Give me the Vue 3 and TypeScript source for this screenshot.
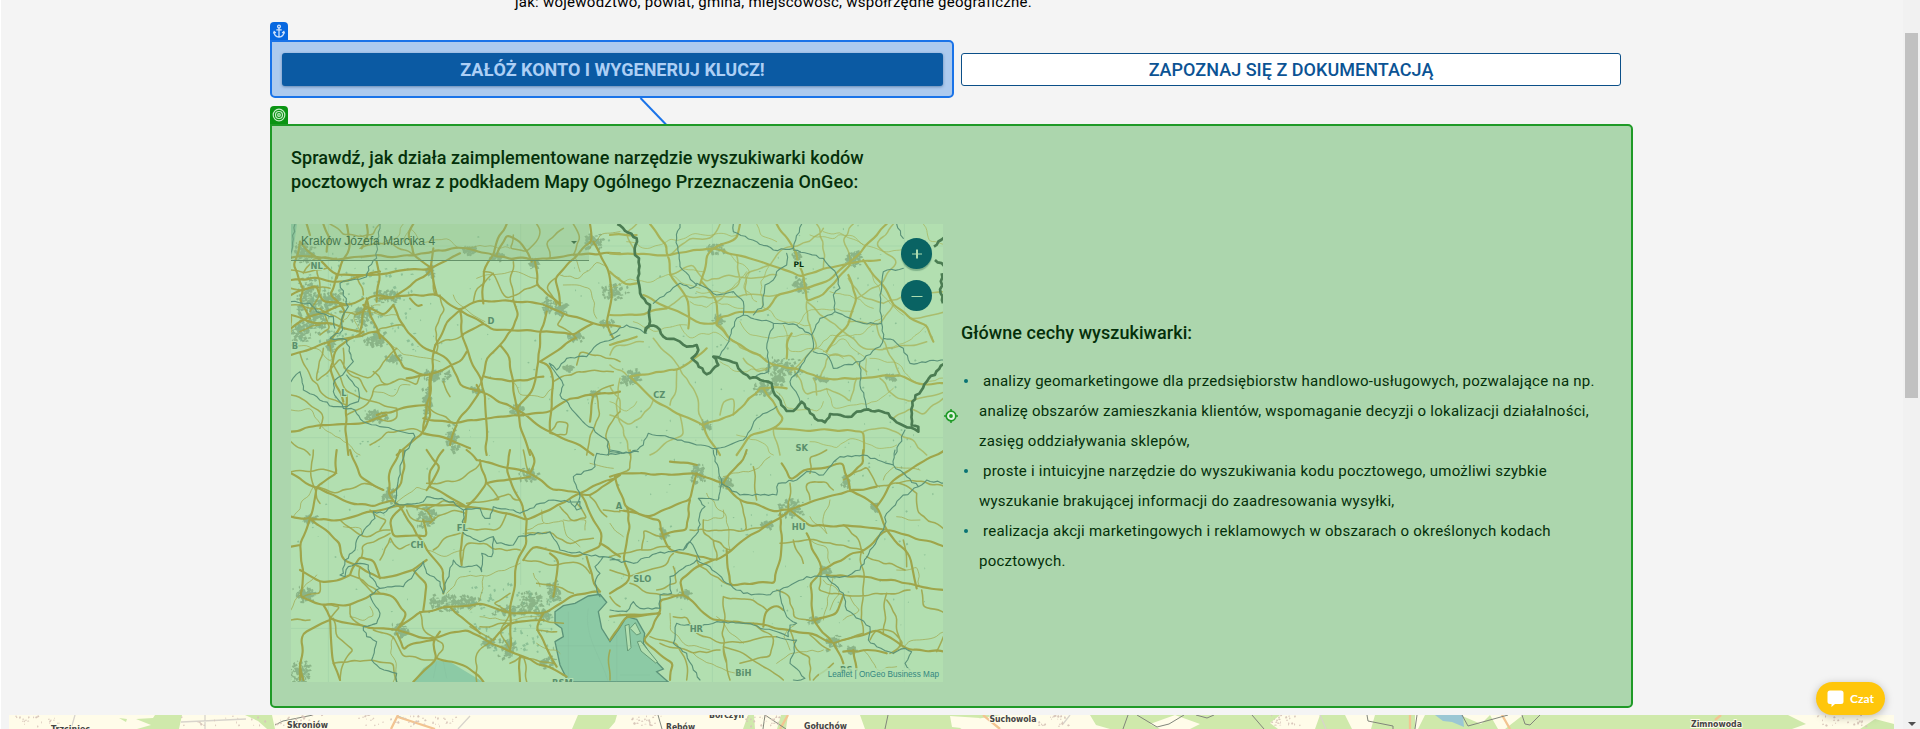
<script setup lang="ts">
interface Tile { x: number; y: number; major: string[]; mid: string[]; minor: string[]; border: string[] }
interface Label { t: string; x: number; y: number; dark?: boolean }

const features = [
  ['analizy geomarketingowe dla przedsiębiorstw handlowo-usługowych, pozwalające na np.', 'analizę obszarów zamieszkania klientów, wspomaganie decyzji o lokalizacji działalności,', 'zasięg oddziaływania sklepów,'],
  ['proste i intuicyjne narzędzie do wyszukiwania kodu pocztowego, umożliwi szybkie', 'wyszukanie brakującej informacji do zaadresowania wysyłki,'],
  ['realizacja akcji marketingowych i reklamowych w obszarach o określonych kodach', 'pocztowych.'],
]

// Map geometry, one entry per tile, three units to a CSS pixel.
const tiles: Tile[] = [
  {
    x: 0, y: 0,
    major: [
      'M33 128L100 125L170 135L250 125L400 122L470 105L560 100L650 125L760 135L850 125L930 115L1020 115',
      'M300 250L380 243L470 238L540 285L580 262L680 255L790 268L840 290L940 325L1020 335',
      'M540 285L500 320L465 390L455 480L440 590L430 655L350 720',
      'M470 238L455 160L400 120L385 60L400 27', 'M540 285L545 360L570 430L605 495L615 560L620 720',
      'M340 270L370 330L420 390L500 430L540 510L600 530L700 580L760 620L810 650L900 690L940 720',
      'M33 420L150 380L290 350', 'M240 350L260 250L290 240L340 250', 'M380 490L440 480L490 465L540 440L560 410',
      'M33 300L110 325L170 330L240 350', 'M545 360L610 325L640 345L750 345L880 360L940 325',
      'M610 325L540 285', 'M800 290L780 350L775 440L755 530L710 580L730 660L750 720',
      'M33 650L120 630L250 625L320 600', 'M430 610L520 625L700 600L810 590L870 550L940 540L1020 530',
      'M605 495L620 430L660 390L700 340L715 300L700 255', 'M660 390L690 430L700 500L710 580',
      'M615 485L690 500L790 485', 'M200 540L195 640L205 720', 'M60 80L90 115L170 180L250 180L370 165L455 160L540 115',
      'M840 270L825 190L900 110L935 80L930 27', 'M765 140L770 210L840 270', 'M610 265L610 170L640 120L650 80L680 27',
      'M940 80L965 130L990 190L995 250L980 320L1000 370', 'M885 370L780 440', 'M290 350L340 400L370 460L440 480',
      'M33 195L120 190L180 200L300 170', 'M33 240L110 210L130 260L200 270L250 250', 'M33 340L100 300L200 270',
      'M430 655L500 670L570 700', 'M530 630L510 690', 'M530 625L600 530L590 510',
      'M290 600L350 585L440 570', 'M940 540L930 620', 'M810 650L815 550L820 500L805 450L780 440',
      'M60 80L40 150L70 220L60 260L90 310', 'M170 180L150 240L195 290L180 340L145 390', 'M90 60L80 27', 'M130 27L150 70L140 110', 'M200 27L210 90L180 160L170 190',
      'M245 100L265 60L260 27', 'M460 100L450 170L350 240', 'M250 350L170 400L150 460L190 560', 'M290 140L300 190L290 260', 'M755 140L720 80L680 60L650 120',
      'M390 250L410 275L425 270', 'M450 480L448 540L452 600L425 655', 'M260 250L270 300L300 370', 'M250 270L310 300L340 270',
    ],
    mid: [
      'M150 390L160 450L200 530L280 560L350 580', 'M60 415L90 480L130 540L200 570', 'M33 300L33 350', 'M33 540L80 560L130 600L120 640',
      'M370 330L300 340L290 350', 'M465 390L550 360', 'M350 400L300 460L270 490L190 460L190 400', 'M490 500L510 545', 'M585 530L605 495',
      'M700 60L690 100L740 110L780 60L770 27', 'M770 210L680 250L640 175L610 170', 'M880 27L900 70L880 120', 'M810 130L800 80L850 40',
      'M455 160L465 240', 'M580 262L590 220L640 175', 'M150 27L190 60L280 60L300 27', 'M400 120L330 80L240 100', 'M480 240L495 285L465 340L475 390L470 410',
      'M820 500L890 470L1000 470', 'M890 450L900 410L960 420L1020 440', 'M940 540L1000 510', 'M850 300L830 330L890 370', 'M810 650L830 620L865 625L860 660L810 655',
      'M280 470L320 510L360 490L410 510L420 480', 'M130 400L110 500L180 430L210 480L240 490L260 530', 'M33 680L90 720', 'M270 690L320 650L390 640L430 655',
      'M350 580L350 610L330 620L290 610', 'M440 570L480 600L530 625', 'M33 220L150 220', 'M33 270L120 280L190 320', 'M70 175L100 130L170 130', 'M200 600L260 570L280 520L340 500',
      'M120 280L150 340L120 360', 'M60 350L120 330', 'M700 255L690 200L700 140', 'M825 190L800 220L830 270', 'M950 540L960 600L930 660L920 720', 'M1020 590L980 650L985 720',
      'M110 160L120 230L90 290', 'M33 165L90 170L140 160', 'M230 180L250 240', 'M180 290L230 300L260 280',
    ],
    minor: ['M33 585L90 580L130 640L190 680L240 720', 'M360 90L390 40L420 80L500 70L540 100L600 90L690 100', 'M240 60L300 90L350 70L370 27', 'M840 180L900 190L950 140L1020 190', 'M850 210L930 220L950 310', 'M900 170L880 120', 'M280 530L340 545L360 510L390 510', 'M700 500L720 540L790 550L820 520', 'M615 320L540 270L520 240', 'M320 380L380 420L480 440', 'M180 330L220 290L300 300L350 300', 'M33 390L110 400L160 440', 'M1020 50L960 60L930 100', 'M590 190L690 170L770 190', 'M240 350L220 310L250 280L300 270'],
    border: ['M300 27L290 90L290 130L265 155L260 185L215 195L180 205L205 275L185 315L188 345L150 370L200 375L220 440L195 470L165 495L160 530L190 580L225 585L250 620L300 635L400 655L405 665L370 720', 'M33 500L60 470L70 525L160 575L200 575L235 560L235 520L200 480', 'M808 445L850 510L840 540L900 610L985 680L985 720', 'M808 445L830 465L860 430L920 425L950 390L1020 360', 'M33 260L90 265L110 290L160 305L165 340', 'M33 130L45 27'],
  },
  {
    x: 990, y: 0,
    major: [
      'M0 115L80 118L180 120L300 100L380 120L480 150L570 185L640 160L720 145L810 135', 'M120 27L170 90L180 180L235 260L235 340',
      'M100 240L180 280L270 325L320 325L330 305L400 290L470 285L500 240L590 220L660 195L720 140L830 27',
      'M320 330L370 380L450 420L490 450L550 460L630 490L750 490L870 480L920 505L1005 505', 'M500 27L550 100L580 180L590 260L640 240L720 150',
      'M760 135L810 200L850 270L900 310L950 330L970 380', 'M270 210L290 120L310 100L380 70L390 27', 'M275 200L320 260L320 330',
      'M530 430L535 370L545 355', 'M715 180L740 250L715 330L670 380L650 410', 'M455 520L530 520', 'M0 60L80 60',
      'M0 300L80 300L170 280', 'M0 390L80 365', 'M60 485L130 555L210 600L280 630L310 690L330 720', 'M60 485L140 470L200 465L290 400', 'M280 630L370 600L450 520',
      'M460 520L500 580L520 610L490 640L420 660L380 720', 'M490 640L620 645L760 650L760 720', 'M0 170L50 210L80 205',
    ],
    mid: [
      'M30 490L20 580L60 720', 'M130 370L210 460L250 520L280 630', 'M200 465L195 540L180 570', 'M0 450L50 480', 'M450 420L390 400L330 330', 'M80 118L50 50L80 27', 'M180 120L240 70L300 70L330 27',
      'M180 180L250 150L290 200L360 180L430 190L500 180', 'M170 280L220 240L300 250L400 240L500 240', 'M320 260L390 200L380 120', 'M410 240L405 180L480 150', 'M480 150L520 100L600 80L640 40', 'M590 260L600 330L620 400L540 470',
      'M590 260L660 320L700 350', 'M640 160L640 80L620 27', 'M720 140L700 70L730 27', 'M715 320L800 330L850 270', 'M820 265L750 240L715 190', 'M820 265L900 240L1005 230', 'M740 250L820 200L860 140L800 90L850 27', 'M900 310L1005 290',
      'M870 480L830 400L800 330', 'M700 350L760 400L830 400L950 380', 'M630 490L660 420L720 420L770 470', 'M550 460L590 540L650 520L720 560L740 490', 'M490 450L440 470L400 430', 'M0 600L60 630L120 580L130 555', 'M210 600L220 660L170 680L120 720',
      'M370 600L370 550L340 560L330 600', 'M0 515L30 550L30 590', 'M1005 530L900 560L850 540L810 490', 'M1005 545L940 600L900 580L850 610', 'M950 720L900 670L830 640L760 650', 'M0 420L20 390L100 380', 'M510 720L490 640', 'M620 540L610 490',
    ],
    minor: [
      'M0 220L60 190L130 200L220 160L280 170', 'M50 80L120 100L170 80L240 60L380 60', 'M330 90L370 130L420 170L400 220L440 260', 'M240 260L290 280L320 260L400 280', 'M480 150L450 200L460 280L520 320L600 330', 'M390 320L420 360L490 370L600 360',
      'M520 330L540 410L620 400L700 430', 'M600 60L660 70L700 60L760 90L820 110L900 100', 'M760 90L720 60L640 50', 'M440 27L450 60L500 80', 'M180 180L240 210L270 220', 'M330 440L380 470L470 460', 'M650 520L670 580L740 570L800 560L850 520',
      'M780 430L850 440L930 510L1005 490', 'M820 400L890 380L950 330', 'M940 27L960 80L1005 90', 'M780 160L810 230L880 300', 'M660 230L720 240L790 280', 'M620 400L660 360L750 360L820 300', 'M210 330L240 370L310 350L360 380', 'M500 530L530 580L620 590L640 560',
      'M380 660L450 680L490 720', 'M600 680L680 700L720 670L800 700L860 690', 'M0 560L50 590L80 560', 'M70 320L130 350L230 330', 'M410 170L350 230L260 230', 'M640 410L700 370L770 430L770 480', 'M560 330L590 290L680 280L730 290',
    ],
    border: [
      'M0 360L50 330L80 340L110 355', 'M0 710L60 715L100 690L115 655L190 670L260 690L320 700L400 675L440 610L500 575', 'M855 720L885 645', 'M320 700L320 720',
      'M210 27L200 70L210 155L260 210L240 220L210 205L130 265', 'M260 205L320 240L370 230L400 260L400 300L380 310L350 390L320 430', 'M400 300L490 325L560 330L605 360L610 400L540 500L570 560', 'M490 325L470 400L475 470L420 490',
      'M370 27L370 50L440 80L490 105L550 100L575 27', 'M530 115L530 150L500 170L490 195L465 210L460 270L430 300', 'M550 105L640 130L680 180L690 220L670 240L675 290L630 310L605 360', 'M675 290L760 325L815 325L820 370L850 375L880 400L900 445L1005 435', 'M610 410L650 420L670 460L750 440L810 395L820 370', 'M750 440L750 500L770 580', 'M815 325L810 240L820 170L880 160', 'M860 27L880 70',
    ],
  },
  {
    x: 0, y: 705,
    major: [
      'M33 70L100 110L200 155L280 170L340 150L360 170L400 230L440 300L490 360L490 430', 'M90 205L180 210L260 185L340 170L450 165L560 170L680 190L740 210L810 180L900 130L1020 75',
      'M90 205L60 280L70 360L60 440L130 465L210 465L280 430', 'M33 200L90 205L110 110L170 70L170 0', 'M90 205L180 280L190 330L240 350L300 385L400 360L440 330', 'M510 470L600 460L700 490L790 490L870 440L960 425',
      'M510 470L420 485L350 540L440 565L560 540L680 600L730 620L860 680', 'M350 540L270 535L150 505L130 465', 'M150 510L70 550L60 640L60 690', 'M360 0L330 60L325 130L350 165', 'M450 110L490 130L560 170L550 240L540 310L545 345',
      'M600 30L620 100L560 170', 'M590 30L750 70L820 120L930 135', 'M620 100L750 80', 'M560 0L590 30', 'M750 70L765 27L750 0', 'M740 210L740 280L710 340L700 430L690 490L690 600', 'M740 210L720 150L680 60L690 0',
      'M900 130L930 190L965 250L960 290L890 320L760 290L730 330', 'M510 470L600 550', 'M480 545L460 570L470 625L400 695', 'M470 625L560 650L610 695', 'M720 620L720 695', 'M790 490L770 540L830 650', 'M150 505L160 640L180 690',
      'M280 430L340 440L380 490L350 540', 'M350 550L370 600L400 580L460 570', 'M60 640L70 690', 'M440 0L480 50L440 120', 'M490 0L450 60L450 110', 'M210 375L180 390L120 395L60 360', 'M210 375L240 320L280 330L300 385', 'M430 210L440 260L340 260L330 210L370 170', 'M33 290L60 285', 'M370 0L375 50L365 100L330 130', 'M210 0L240 80L310 120', 'M430 480L440 400L400 360', 'M820 440L835 330L810 310', 'M920 320L940 400L960 425', 'M960 280L1020 320',
      'M640 570L690 520L790 510', 'M930 135L1020 75',
    ],
    mid: [
      'M33 65L80 65L140 60L170 70', 'M100 0L95 90L120 160', 'M110 110L170 130L245 100L310 120', 'M180 210L250 260L330 240', 'M245 320L245 290L330 250', 'M300 330L330 260L360 300L400 280', 'M380 180L400 210L460 215L440 180L380 170', 'M450 220L470 200L520 180L560 190L550 240L660 235L680 190',
      'M440 100L540 90L600 40', 'M640 150L690 130L700 150L720 150', 'M620 100L660 150L560 160', 'M560 170L490 150L440 180', 'M540 250L500 260L460 300', 'M545 340L560 280L620 280L640 300L720 300', 'M740 250L820 250L860 280L940 265', 'M730 330L830 345L900 340L930 370', 'M770 400L830 410L880 430', 'M690 430L640 460L690 490',
      'M240 350L240 390L280 430', 'M160 505L170 560L220 600L190 640L180 690', 'M210 465L210 500L270 535', 'M33 510L90 510', 'M120 395L120 430L70 440', 'M300 430L250 390L210 375', 'M280 540L340 560L370 620L460 630', 'M160 640L280 630L340 640L350 695', 'M590 695L590 610L640 570L570 530', 'M730 620L740 695', 'M600 530L690 520', 'M770 540L830 545', 'M690 640L720 620L820 640', 'M690 490L660 550L690 600', 'M420 485L430 540L490 580L490 600L470 625', 'M840 170L870 210L920 205L890 160', 'M730 0L750 70', 'M970 180L1020 185', 'M930 140L980 200', 'M130 465L180 470L150 505', 'M270 180L320 210L300 240', 'M850 520L790 510',
    ],
    minor: ['M100 110L40 200', 'M190 230L245 235L250 260', 'M500 430L540 380L620 380L640 370L720 340', 'M610 380L600 450L570 480', 'M785 180L790 220L850 210L860 260L900 290', 'M850 210L920 210L915 240', 'M33 480L80 400L110 375', 'M340 560L330 610L350 640L340 695', 'M600 500L660 510L780 500', 'M760 370L780 410', 'M930 40L1000 55', 'M340 165L410 110L440 120', 'M770 580L840 610', 'M210 500L240 510L280 500L270 470', 'M790 220L740 240', 'M440 300L500 320L550 300'],
    border: ['M375 0L360 60L345 160L370 165L430 155L440 140L520 155L550 180L600 175L615 205L630 205L640 170L700 180L720 190L780 160L820 150L900 155L905 175L890 180L870 150', 'M345 165L310 190L280 185L285 205L230 270L225 300L195 330L190 370L180 375L195 380L205 350L240 340L265 345L270 380L300 415L370 410L400 375L430 335L440 370L480 395L490 430L500 390L520 330L540 350L590 345L605 365L605 310L635 320L640 260L600 275L550 250L550 180', 'M300 415L270 435L300 490L290 520L250 530L260 560L290 575L275 630L300 655L350 670L350 695', 'M640 260L650 280L700 285L715 260L810 245L840 300L970 320L1020 330', 'M970 320L945 350L960 370L945 400L960 440', 'M1020 10L980 15L950 10L945 50L880 80L900 140L885 170'],
  },
  {
    x: 990, y: 705,
    major: [
      'M0 80L50 70L180 75L260 70L340 100L390 150L500 185L540 180L640 145L720 120L800 170L830 240L900 320L920 415', 'M260 70L240 150L110 200L30 180', 'M15 80L45 170L110 200L150 210L160 260L180 300L260 320L320 330L400 270L470 225L540 180', 'M510 190L515 280L495 400L400 400L360 405L350 300',
      'M220 435L150 450L150 490L0 500', 'M220 435L310 510L430 520L540 540L620 555L670 580L610 510L600 400L635 360L590 250', 'M670 580L700 640', 'M670 580L800 540L900 600L1005 605', 'M635 360L710 320L770 295L830 240L1005 290', 'M220 435L210 390L260 350L310 330', 'M240 150L230 240L160 255', 'M650 375L760 380L900 400L1005 420', 'M150 490L100 570L190 640L180 690', 'M540 180L600 230L700 225L830 240', 'M720 120L700 40L660 50L580 60L540 90L515 40', 'M340 100L370 60L400 30L410 0', 'M0 430L50 400L60 380L40 330L60 230L50 170', 'M0 570L50 500L150 490', 'M700 605L760 600L830 610', 'M730 600L740 660', 'M610 510L680 490L700 435', 'M460 530L470 480L500 465L520 480', 'M760 0L760 40L710 80', 'M800 110L760 120L720 120', 'M180 35L260 45', 'M800 170L840 100L900 60L1005 0',
    ],
    mid: [
      'M60 0L60 60L15 80', 'M0 320L80 300L180 290', 'M0 360L60 380L160 350L190 310', 'M60 400L120 430L220 435', 'M95 300L100 240L160 260', 'M280 210L280 250L360 300', 'M310 270L320 330', 'M390 150L400 190L410 240L310 240L240 240', 'M410 240L470 225', 'M430 50L440 150', 'M600 70L600 20L650 0', 'M600 150L590 100L650 95L670 120', 'M700 90L770 50L800 110L870 100L920 130', 'M540 100L535 180', 'M510 280L620 270L760 300', 'M550 270L580 340', 'M635 360L625 420L700 435L830 430L900 420', 'M755 300L760 440L755 490L760 550', 'M830 430L820 550', 'M830 450L860 500L870 590L840 610', 'M780 570L800 540L850 545L880 580L850 610', 'M935 420L940 470L1005 490', 'M770 320L860 350L885 360', 'M860 100L900 90L1005 110', 'M920 130L925 190L1005 240', 'M500 420L540 440L550 500L620 510', 'M340 440L340 590L350 640', 'M190 500L230 500L260 550L340 580L430 570L500 560', 'M340 590L360 690', 'M340 590L400 610L480 660L520 690', 'M430 520L490 560L480 620L390 640', 'M150 580L250 610L330 600', 'M0 690L0 600', 'M120 560L200 580L230 640L230 690', 'M540 540L560 600L600 620L600 690', 'M600 555L660 600', 'M760 550L700 570', 'M980 605L1000 560', 'M700 225L740 260L760 310', 'M140 420L200 400L190 350', 'M0 440L30 470', 'M360 405L270 350L260 320', 'M470 480L430 450L340 440', 'M670 640L610 690', 'M880 270L890 350',
    ],
    minor: ['M360 300L350 200L290 130', 'M280 210L340 205L340 180', 'M600 270L650 290L660 340', 'M650 250L600 200', 'M660 480L690 430L640 390', 'M670 380L660 430L640 510', 'M0 220L40 260', 'M720 440L750 480L700 510', 'M180 490L180 540L220 580L300 600', 'M860 360L920 350L930 410', 'M860 600L910 570L980 560L1005 545', 'M860 200L930 210', 'M560 520L520 560L540 600', 'M480 20L430 60L340 80', 'M660 150L640 200L650 250', 'M930 60L850 50L820 90', 'M320 500L360 550L400 580', 'M760 600L800 660L860 650', 'M500 640L540 610L640 600', 'M250 610L320 650L380 670'],
    border: ['M0 330L70 340L140 310L220 300L240 275L265 245L270 190L285 170L265 145L325 150L335 100L310 0', 'M335 100L390 135L500 135L505 100L560 90L590 65L640 75L690 20L760 15L850 45L890 80L925 110L870 145L830 190L820 240L780 300L750 360L700 380L640 380L590 380L510 420L470 435L400 430L350 400L300 350L260 330L240 345L180 380L185 430L150 435L150 475L90 475L70 455L50 485L0 480', 'M925 110L950 90L1005 100', 'M510 420L515 460L530 500L560 520L540 525L535 560L430 525L400 520L320 515L270 530L200 520L190 580L230 610L250 660L270 690', 'M500 560L560 570L540 640L585 685L550 690', 'M650 380L700 430L710 480L780 530L775 570L800 590L850 610L885 595L905 605L885 640L900 660', 'M220 300L240 275L260 310L270 330', 'M850 45L855 0', 'M0 0L40 10L85 5'],
  },
]

const frontiers = [
  'M1012 27L1070 70L1065 120L1077 130L1075 200L1085 245L1110 270L1110 320L1095 352L1110 332L1130 335L1150 365L1200 380L1220 395L1250 390L1255 405L1235 430L1280 478L1315 450L1300 425L1325 432L1370 445L1375 460L1410 490L1430 488L1475 505L1485 540L1520 588L1540 588L1565 560L1605 610L1635 622L1650 597L1715 605L1730 590L1765 583L1825 595L1850 622L1915 650L1915 635L1895 630L1897 560L1940 500L1992 447',
  'M1962 95L1992 68', 'M1965 135L1992 153', 'M1985 175L1982 235L1989 265',
]

const towns: number[][] = [
  [250, 300, 75, 75], [320, 245, 80, 40], [280, 370, 70, 50], [70, 110, 60, 60], [80, 240, 60, 110], [440, 570, 28, 120], [470, 480, 90, 40], [940, 80, 60, 50], [570, 105, 50, 30], [840, 280, 50, 40], [800, 270, 30, 50], [710, 580, 45, 35], [290, 600, 80, 40], [515, 670, 40, 90], [975, 325, 40, 25], [885, 365, 50, 25], [590, 525, 35, 22], [760, 145, 30, 35], [150, 390, 30, 40], [450, 165, 25, 40], [650, 125, 45, 25], [110, 300, 110, 110], [340, 430, 50, 25], [60, 350, 60, 60], [150, 250, 90, 50], [940, 535, 30, 20], [865, 460, 35, 18],
  [1050, 485, 60, 50], [1510, 455, 110, 55], [1560, 210, 50, 50], [1720, 130, 50, 50], [1305, 100, 50, 30], [1315, 315, 40, 35], [1450, 520, 60, 40], [1620, 490, 50, 20], [1830, 485, 50, 20], [1275, 630, 35, 30], [1490, 490, 40, 40], [1550, 125, 30, 30], [1000, 230, 80, 50],
  [500, 1165, 110, 60], [560, 1160, 90, 40], [750, 780, 60, 45], [75, 1140, 70, 50], [90, 910, 40, 30], [325, 840, 40, 50], [360, 1245, 50, 40], [680, 1300, 50, 60], [750, 1160, 70, 60], [690, 1185, 120, 30], [60, 1370, 60, 70], [440, 905, 60, 60], [790, 1195, 50, 40], [800, 1340, 50, 35], [820, 1130, 40, 70], [625, 1280, 40, 40],
  [1530, 880, 75, 60], [1250, 775, 45, 60], [1335, 800, 40, 40], [1210, 1138, 50, 30], [1660, 1282, 45, 40], [1780, 875, 28, 25], [1630, 1065, 35, 25], [1150, 955, 30, 35], [1600, 1215, 40, 20], [1695, 800, 25, 40], [1460, 930, 40, 25], [1715, 1305, 30, 25],
]

const labels: Label[] = [
  { t: 'NL', x: 110, y: 162 }, { t: 'D', x: 633, y: 326 }, { t: 'B', x: 45, y: 402 }, { t: 'L', x: 192, y: 542 },
  { t: 'PL', x: 1556, y: 157, dark: true }, { t: 'CZ', x: 1138, y: 548 }, { t: 'SK', x: 1565, y: 709 },
  { t: 'FL', x: 547, y: 948 }, { t: 'CH', x: 411, y: 999 }, { t: 'A', x: 1017, y: 881 }, { t: 'HU', x: 1556, y: 944 },
  { t: 'SLO', x: 1087, y: 1101 }, { t: 'HR', x: 1249, y: 1252 }, { t: 'BiH', x: 1390, y: 1383 }, { t: 'RS', x: 1699, y: 1375 }, { t: 'RSM', x: 847, y: 1413 },
]

function seeded(seed: number): () => number {
  let s = seed
  return () => { s = (s * 16807) % 2147483647; return s / 2147483647 }
}

// Breaks straight legs into short wavering steps; `round` joins them with curves.
const wander = seeded(2024)
function organic(paths: string[], step: number, sway: number, round: boolean): string {
  return paths.join('').split('M').filter(Boolean).map((sub) => {
    const pts = sub.split('L').map((p) => p.trim().split(' ').map(Number))
    const out: number[][] = [pts[0]]
    for (let i = 1; i < pts.length; i++) {
      const [ax, ay] = pts[i - 1]
      const [bx, by] = pts[i]
      const len = Math.hypot(bx - ax, by - ay) || 1
      const n = Math.max(1, Math.round(len / step))
      for (let k = 1; k < n; k++) {
        const off = (wander() - 0.5) * 2 * sway
        out.push([ax + (bx - ax) * k / n - (by - ay) / len * off, ay + (by - ay) * k / n + (bx - ax) / len * off])
      }
      out.push([bx, by])
    }
    const f = (v: number) => v.toFixed(1)
    let d = `M${f(out[0][0])} ${f(out[0][1])}`
    for (let i = 1; i < out.length; i++) {
      const [x, y] = out[i]
      if (round && i < out.length - 1) {
        const [nx, ny] = out[i + 1]
        d += `Q${f(x)} ${f(y)} ${f((x + nx) / 2)} ${f((y + ny) / 2)}`
      } else d += `L${f(x)} ${f(y)}`
    }
    return d
  }).join('')
}

const drawn = tiles.map((t) => ({
  x: t.x, y: t.y,
  major: organic(t.major, 24, 4.5, true),
  mid: organic(t.mid, 20, 5.5, true),
  minor: organic(t.minor, 16, 6, true),
  border: organic(t.border, 12, 3.5, false),
}))
const frontier = organic(frontiers, 11, 3.5, false)

function speck(cx: number, cy: number, r: () => number, size: number): string {
  const w = size * (0.4 + r()), h = size * (0.4 + r())
  return `M${cx.toFixed(0)} ${cy.toFixed(0)}l${w.toFixed(1)} ${(-h / 2).toFixed(1)}l${(w / 2).toFixed(1)} ${h.toFixed(1)}l${(-w).toFixed(1)} ${(h / 2).toFixed(1)}z`
}

const rnd = seeded(4711)
const urban = towns.map(([x, y, w, h]) => {
  let d = ''
  const n = Math.round(Math.sqrt(w * h) * 1.3)
  for (let i = 0; i < n; i++) {
    d += speck(x + (rnd() + rnd() - 1) * w * 0.55 - 3, y + (rnd() + rnd() - 1) * h * 0.55, rnd, 6.5)
  }
  return d
}).join('')

let villages = ''
for (let i = 0; i < 300; i++) villages += speck(40 + rnd() * 1930, 30 + rnd() * 1200, rnd, 4)
for (let i = 0; i < 90; i++) villages += speck(570 + rnd() * 250, 1100 + rnd() * 210, rnd, 6)
for (let i = 0; i < 110; i++) villages += speck(40 + rnd() * 360, 150 + rnd() * 240, rnd, 6)

const strip = seeded(92)
let houses = ''
for (const [x, w] of [[15, 45], [180, 120], [275, 55], [355, 60], [410, 45], [630, 30], [1035, 35], [1270, 30], [1815, 50], [740, 40]]) {
  for (let i = 0; i < 24; i++) houses += speck(x + strip() * w, 715 + strip() * 11, strip, 1.4)
}
</script>

<template>
  <div class="page">
    <p class="intro">jak: województwo, powiat, gmina, miejscowość, współrzędne geograficzne.</p>

    <div class="actions">
      <div class="anchor">
        <span class="tab blue">
          <svg viewBox="0 0 18 18" width="18" height="18"><g fill="none" stroke="#cfe2fb" stroke-width="1.3"><circle cx="9" cy="4.600" r="1.400" /><path d="M9 6v9M6.300 7.800h5.400M4 9.800c.1 3 2.100 5.100 5 5.300 2.900-.2 4.900-2.300 5-5.300M3.400 11.500L4.200 9.600l1.700 1.300M14.600 11.500l-.8-1.900-1.700 1.300" /></g></svg>
        </span>
        <button class="primary">ZAŁÓŻ KONTO I WYGENERUJ KLUCZ!</button>
        <svg class="link" viewBox="0 0 30 28" width="30" height="28"><path d="M2.500 0L28 26.500" stroke="#1a73e8" stroke-width="2" /></svg>
      </div>
      <button class="secondary">ZAPOZNAJ SIĘ Z DOKUMENTACJĄ</button>
    </div>

    <section class="panel">
      <span class="tab green">
        <svg viewBox="0 0 18 18" width="18" height="18"><g fill="none" stroke="#c8ecc8" stroke-width="1.200"><circle cx="9" cy="9" r="5.800" /><circle cx="9" cy="9" r="3.500" /><circle cx="9" cy="9" r="1.300" /></g></svg>
      </span>
      <h2>Sprawdź, jak działa zaimplementowane narzędzie wyszukiwarki kodów<br>pocztowych wraz z podkładem Mapy Ogólnego Przeznaczenia OnGeo:</h2>
      <div class="columns">
        <div class="map">
          <svg class="canvas" viewBox="33 27 1956 1374" width="652" height="458">
            <rect x="33" y="27" width="1956" height="1374" fill="#b2dfb0" />
            <path d="M33 27h18L42 90 33 130zM400 1401L430 1360 470 1335 510 1340 550 1365 610 1401z" fill="#8ccaa5" />
            <path d="M825 1190L850 1172 885 1165 925 1143 960 1138 980 1162 955 1190 965 1240 990 1280 1018 1240 1040 1205 1070 1213 1094 1255 1090 1285 1115 1325 1150 1362 1130 1370 1165 1401H865L840 1350 825 1280 850 1265 845 1240 825 1225z" fill="#8ccaa5" stroke="#5b9379" stroke-width="4" />
            <g fill="#b2dfb0" stroke="#659b76" stroke-width="3">
              <path d="M1035 1232l12-4 6 70-10 10zM1050 1240l16-17 16 32-12 5zM1072 1280l10-2 50 62-5 4-44-36z" />
            </g>
            <path d="M33 93H1989M33 668H1989M33 1240H820M145 27V1401M722 27V1110M1297 27V1401M1873 27V1401M825 1292H1090M865 1190V1401M1010 1260V1401M925 1180C910 1260 960 1320 985 1401M1020 1380H1110M470 1340L460 1390M490 1340L500 1390" fill="none" stroke="#7fb694" stroke-opacity=".3" stroke-width="2" />
            <path :d="urban" fill="#82ad80" fill-opacity=".85" />
            <path :d="villages" fill="#7fb58c" fill-opacity=".75" />
            <g v-for="(tile, i) in drawn" :key="i" :transform="`translate(${tile.x} ${tile.y})`" :class="['tile', { poland: i === 1 }]">
              <path class="minor" :d="tile.minor" />
              <path class="mid" :d="tile.mid" />
              <path class="major" :d="tile.major" />
              <path class="border" :d="tile.border" />
            </g>
            <path class="frontier" :d="frontier" />
            <text v-for="l in labels" :key="l.t" :x="l.x" :y="l.y" :class="['country', { dark: l.dark }]">{{ l.t }}</text>
          </svg>
          <div class="search"><span>Kraków Józefa Marcika 4</span><i></i></div>
          <div class="zoom">
            <button class="in"><svg viewBox="0 0 12 12" width="12" height="12"><path d="M1 6h10" stroke="#addcb0" stroke-width="1" /><path d="M6 1.500v9" stroke="#addcb0" stroke-width="2" /></svg></button>
            <button><svg viewBox="0 0 12 12" width="12" height="12"><path d="M.5 6.500h11" stroke="#addcb0" stroke-width="1" /></svg></button>
          </div>
          <div class="credit">Leaflet | OnGeo Business Map</div>
        </div>
        <div class="info">
          <h3>Główne cechy wyszukiwarki:</h3>
          <ul>
            <li v-for="(f, i) in features" :key="i"><div v-for="(line, j) in f" :key="j" :class="{ first: j === 0 }">{{ line }}</div></li>
          </ul>
        </div>
      </div>
      <svg class="target" viewBox="0 0 14 14" width="14" height="14"><circle cx="7" cy="7" r="4.800" fill="#e1f3e1" stroke="#1f9a27" stroke-width="1.700" /><circle cx="7" cy="7" r="1.900" fill="#1f9a27" /><path d="M7 0v3M7 11v3M0 7h3M11 7h3" stroke="#1f9a27" stroke-width="1.500" /></svg>
    </section>

    <svg class="strip" viewBox="9 715 1885 14" width="1885" height="14">
      <rect x="9" y="715" width="1885" height="14" fill="#fffce9" />
      <g fill="#cfe9ab">
        <path d="M137 729l14-4-15-6 17-1 2-3h27l-3 14zM245 715h27l3 14h-8l-9-8zM119 718l8 1-1 3zM578 715h39l-2 7-6 7h-37zM748 715h6l1 14h-12zM781 715h7l-2 14h-9zM860 715h80l10 14H865zM936 715h65l-25 4-16 10h-24zM1090 715h190l-10 8 8 6H1110l-14-4zM1320 715h95v14h-100zM1425 715h65l8 14h-80zM1523 715h265l18 9-14 5H1505zM1875 719l19 5v5h-34z" />
      </g>
      <path d="M1150 724l25-9 25 9-10 5h-30zM1345 715h30l-4 14h-19zM1460 715h30l-9 9zM950 716l30 2-10 11-18-2z" fill="#fffce9" />
      <path d="M397 715l12 5-8-1zM1435 715h28l1 12-12-5-9-1z" fill="#9bc7d4" />
      <path d="M398 717l37 12M391 729l7-14M780 729l8-14M983 715l17 14M1410 715v14M1502 715l8 14M1715 720l6-5" fill="none" stroke="#f3c491" stroke-width="2.300" />
      <path d="M75 715l-4 14M181 722l65-3M205 715v14M470 716l-12 13M1070 715l-7 9M1320 715l6 14" fill="none" stroke="#d8d4cc" stroke-width="1.300" />
      <path d="M275 725l8-4M283 721l30-6M658 715l4 14M765 715l-2 14M765 715l21 14M888 715l-3 14M1128 715l-5 14M1137 715l20 12 12-3 15-9M1196 715l11 3 7-3M1252 715l12 14M1367 715l1 6 25 5v3M1417 715l-2 14M1462 715l6 11 40-11M1522 715l3 9 5 1 10-10" fill="none" stroke="#81857b" stroke-width="1" />
      <path :d="houses" fill="#d8c6ba" />
      <g class="places">
        <text x="51" y="732" textLength="39" lengthAdjust="spacingAndGlyphs">Trzciniec</text>
        <text x="287" y="728" textLength="41" lengthAdjust="spacingAndGlyphs">Skroniów</text>
        <text x="709" y="717.500" textLength="35" lengthAdjust="spacingAndGlyphs">Borczyn</text>
        <text x="666" y="730" textLength="29" lengthAdjust="spacingAndGlyphs">Rębów</text>
        <text x="804" y="728.500" textLength="43" lengthAdjust="spacingAndGlyphs">Gołuchów</text>
        <text x="989.500" y="721.500" textLength="47" lengthAdjust="spacingAndGlyphs">Suchowola</text>
        <text x="1691" y="726.500" textLength="51" lengthAdjust="spacingAndGlyphs">Zimnowoda</text>
      </g>
    </svg>

    <button class="chat"><svg viewBox="0 0 17 17" width="17" height="17"><path d="M3 .5h11A2.500 2.500 0 0116.500 3v8.500a2.500 2.500 0 01-2.500 2.500H8l-3.500 3V14H3A2.500 2.500 0 01.5 11.500V3A2.500 2.500 0 013 .5z" fill="#fff" /></svg><span>Czat</span></button>

    <div class="scrollbar"><div class="thumb"></div><i></i></div>
  </div>
</template>

<style>
html, body { margin: 0; overflow: hidden; }
</style>

<style scoped>
.page { position: relative; box-sizing: border-box; width: 1920px; height: 729px; overflow: hidden; background: #f4f4f4; border-left: 1px solid #fff; font-family: Roboto, "Liberation Sans", sans-serif; color: #000; }
button { border: 0; margin: 0; padding: 0; font-family: inherit; }
.intro { margin: -10px 0 0 514px; height: 24px; line-height: 24px; font-size: 15px; letter-spacing: .25px; white-space: nowrap; }
.actions { display: flex; align-items: center; gap: 7px; margin: 26px 0 0 269px; height: 58px; }
.anchor { position: relative; box-sizing: border-box; width: 684px; height: 58px; padding: 11px 9px 10px 10px; border: 2px solid #1a73e8; border-radius: 0 5px 5px 5px; background: #adcaee; }
.primary { display: block; width: 661px; height: 33px; border-radius: 3px; background: #0b5aa3; color: #adcff5; font-size: 18px; line-height: 33px; font-weight: 700; box-shadow: 0 1px 3px rgba(30, 70, 120, .5); }
.secondary { box-sizing: border-box; width: 660px; height: 33px; border: 1px solid #0b4f88; border-radius: 3px; background: #fff; color: #0b5394; font-size: 18px; line-height: 31px; font-weight: 500; letter-spacing: .03px; }
.tab { position: absolute; left: -2px; top: -20px; width: 18px; height: 18px; border-radius: 4px 4px 0 0; }
.tab svg { display: block; }
.blue { background: #0768e0; }
.green { background: #0b9413; }
.link { position: absolute; left: 366px; top: 56px; }
.panel { position: relative; box-sizing: border-box; width: 1363px; height: 584px; margin: 26px 0 0 269px; padding: 20px 18px 0 19px; border: 2px solid #1f9a27; border-radius: 0 5px 5px 5px; background: #acd6ad; color: #04300a; }
h2, h3 { margin: 0; font-size: 18px; line-height: 24px; font-weight: 500; letter-spacing: .06px; }
.columns { display: flex; gap: 18px; margin-top: 30px; }
.map { position: relative; flex: none; width: 652px; height: 458px; overflow: hidden; }
.canvas { display: block; }
.tile path { fill: none; stroke: #9fa54a; stroke-linejoin: round; stroke-linecap: round; }
.tile .major { stroke-width: 6.500; }
.tile .mid { stroke-width: 4.600; stroke-opacity: .9; }
.tile .minor { stroke-width: 2.600; stroke-opacity: .8; }
.poland path { stroke: #a7b257; }
.poland .mid { stroke-opacity: .75; }
.tile .border { stroke: #5b9379; stroke-width: 3.400; }
.frontier { fill: none; stroke: #4b7c52; stroke-width: 8; stroke-linejoin: round; }
.country { font: 700 25px "DejaVu Sans", sans-serif; text-anchor: middle; fill: #5a8f6b; stroke: #b2dfb0; stroke-width: 6; paint-order: stroke; }
.dark { fill: #062f0c; font-size: 23px; }
.search { position: absolute; left: 0; top: 0; box-sizing: border-box; width: 298px; height: 37px; padding: 0 12px 2px 10px; display: flex; align-items: center; justify-content: space-between; background: rgba(139, 184, 132, .3); border-bottom: 1px solid #659269; color: #487951; font-size: 12px; }
.search span { font-family: "Liberation Sans", sans-serif; }
.search i { border: 3px solid transparent; border-top-color: #487951; border-bottom: 0; margin-top: 2px; }
.zoom { position: absolute; right: 11px; top: 14px; display: flex; flex-direction: column; gap: 11px; }
.zoom button { display: flex; align-items: center; justify-content: center; width: 31px; height: 31px; border-radius: 50%; background: #096363; }
.zoom .in { box-shadow: 0 2px 1px rgba(50, 110, 80, .4); }
.credit { position: absolute; right: 0; bottom: 0; width: 120px; height: 14px; padding: 0 4px 0 0; background: rgba(178, 223, 176, .75); color: #348780; font: 8.200px/14px "Liberation Sans", sans-serif; text-align: right; white-space: nowrap; }
.info { padding-top: 97px; white-space: nowrap; }
ul { list-style: none; margin: 21px 0 0; padding: 0; font-size: 15px; line-height: 30px; letter-spacing: .25px; }
li { position: relative; padding-left: 18px; }
li::before { content: ""; position: absolute; left: 3px; top: 13px; width: 4px; height: 4px; border-radius: 50%; background: #087274; }
.first { padding-left: 4px; }
.target { position: absolute; left: 672px; top: 283px; }
.strip { display: block; margin: 7px 0 0 8px; }
.places { font: 700 9px "DejaVu Sans", sans-serif; fill: #444; stroke: #fffce9; stroke-width: 2; paint-order: stroke; }
.chat { position: absolute; left: 1815px; top: 682px; display: flex; align-items: center; gap: 6px; width: 69px; height: 33px; padding-left: 11px; border-radius: 17px; background: #ffc60b; box-shadow: 0 2px 8px rgba(0, 0, 0, .25); color: #fff; font: 700 12px Lato, sans-serif; }
.scrollbar { position: absolute; right: 0; top: 0; width: 17px; height: 729px; background: #f1f1f1; }
.thumb { width: 13px; height: 365px; margin: 33px 2px 0; background: #c1c1c1; }
.scrollbar i { position: absolute; left: 5px; bottom: 3px; border: 4px solid transparent; border-top-color: #505050; border-bottom: 0; }
</style>
